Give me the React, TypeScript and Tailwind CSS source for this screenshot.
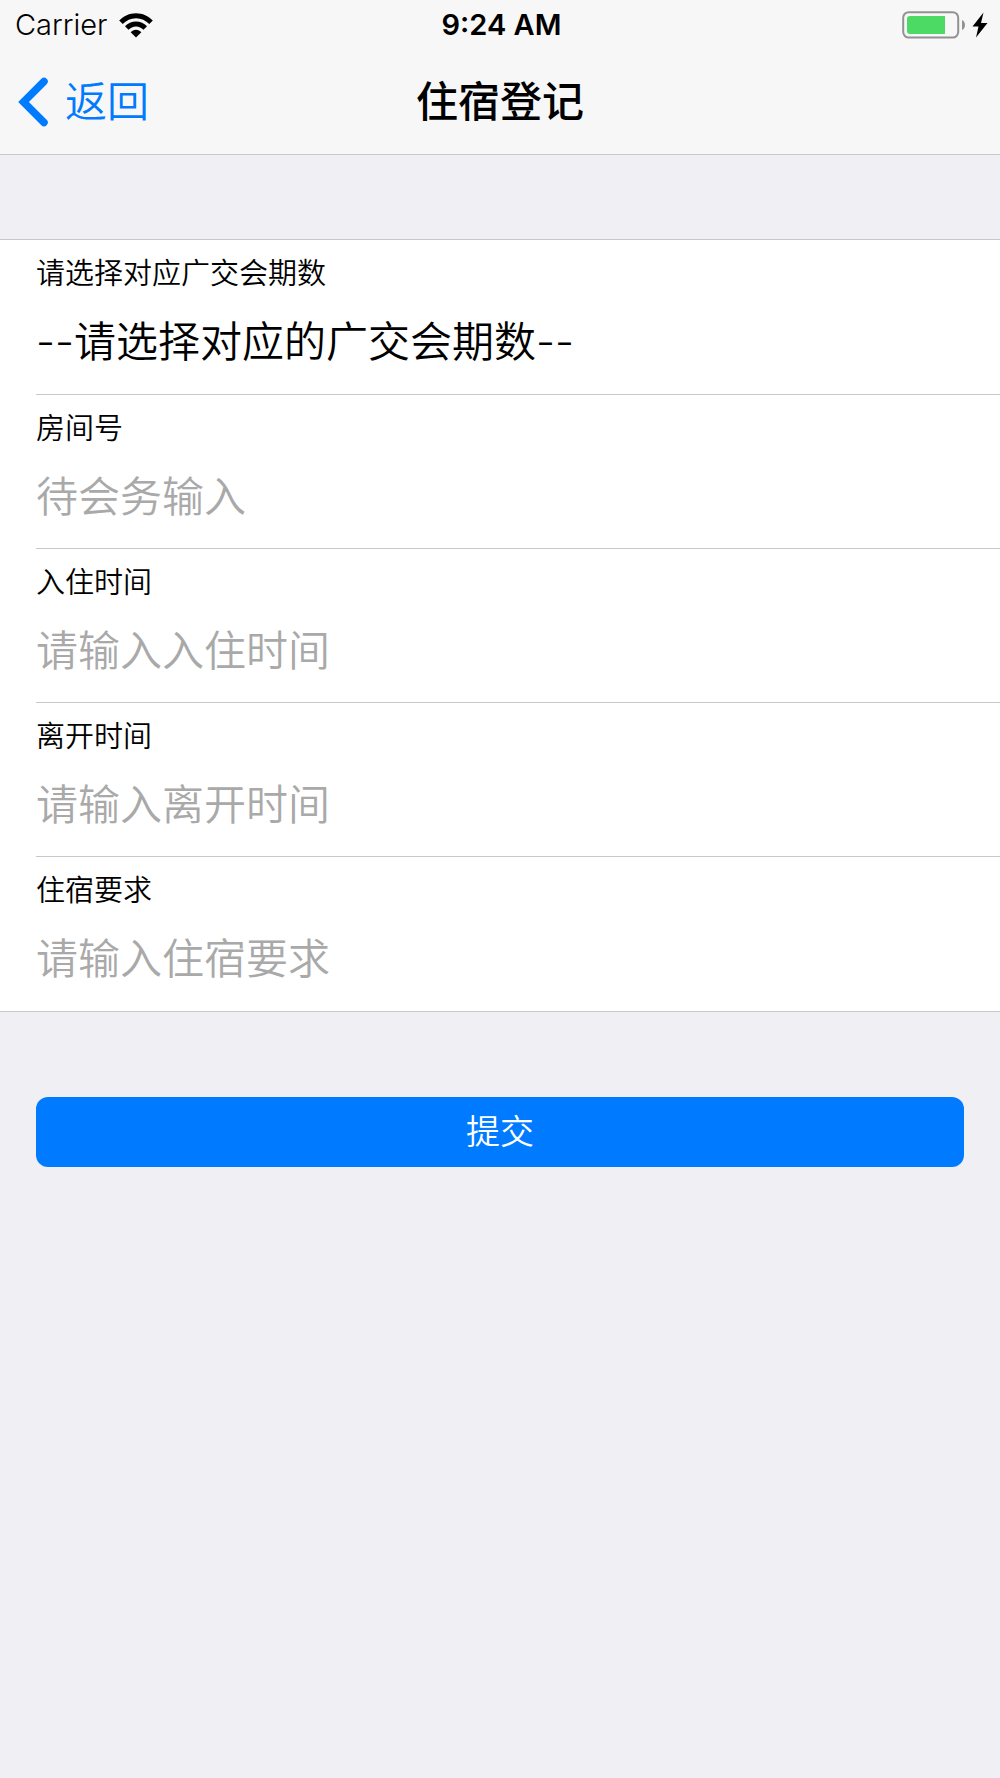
import React, { useState } from 'react';

interface TextField {
    id: string;
    label: string;
    placeholder: string;
}

const textFields: TextField[] = [
    { id: 'room', label: '房间号', placeholder: '待会务输入' },
    { id: 'checkin', label: '入住时间', placeholder: '请输入入住时间' },
    { id: 'checkout', label: '离开时间', placeholder: '请输入离开时间' },
    { id: 'request', label: '住宿要求', placeholder: '请输入住宿要求' },
];

const WifiIcon: React.FC = () => (
    <svg className="w-[34px] h-[25px]" viewBox="0 0 34 25" aria-hidden="true">
        <path d="M0.2 7.6C4.6 3 10.4 0.3 17 0.3s12.4 2.7 16.8 7.3l-3.5 3.5C26.8 7.5 22.2 5.3 17 5.3S7.2 7.5 3.7 11.1z" />
        <path d="M6 13.3C8.9 10.3 12.7 8.4 17 8.4s8.1 1.9 11 4.9l-3.5 3.5c-2-2-4.6-3.4-7.5-3.4s-5.5 1.4-7.5 3.4z" />
        <path d="M11.7 19.2C13.1 17.6 14.9 16.7 17 16.7s3.9 0.9 5.3 2.5L17 24.6z" />
    </svg>
);

const BatteryIcon: React.FC = () => (
    <svg className="w-[64px] h-[28px]" viewBox="0 0 64 28" aria-hidden="true">
        <rect x="1.2" y="1.2" width="55" height="25.4" rx="5.5" fill="none" stroke="#929292" strokeWidth="2" />
        <path d="M8 5h35v18H8a3 3 0 0 1-3-3V8a3 3 0 0 1 3-3z" fill="#4cd964" />
        <path d="M60 9c4 1.5 4 8.5 0 10z" fill="#929292" />
    </svg>
);

const BoltIcon: React.FC = () => (
    <svg className="w-[16px] h-[26px]" viewBox="0 0 16 26" aria-hidden="true">
        <path d="M11.5 0.5L0.5 14.5h6L4 25.5l11.5-14.5H9z" />
    </svg>
);

const BackIcon: React.FC = () => (
    <svg className="w-[30px] h-[50px]" viewBox="0 0 30 50" fill="none" aria-hidden="true">
        <path d="M26 4.5L5.5 25L26 45.5" stroke="#007aff" strokeWidth="7.5" strokeLinecap="round" strokeLinejoin="miter" />
    </svg>
);

const App: React.FC = () => {
    const [session, setSession] = useState('');

    return (
        <div className="min-h-screen bg-[#efeff4] text-black font-[350] font-['Inter','Noto_Sans_CJK_SC',sans-serif]">
            <header className="bg-[#f7f7f7] border-b border-[#c8c7cc]">
                <div className="grid grid-cols-3 items-center h-[50px] pl-[15px] pr-3 text-[29px] leading-[50px]">
                    <div className="flex items-center gap-3">
                        <span>Carrier</span>
                        <WifiIcon />
                    </div>
                    <span className="text-center font-semibold">9:24 AM</span>
                    <div className="flex items-center justify-end gap-[6px]">
                        <BatteryIcon />
                        <BoltIcon />
                    </div>
                </div>
                <nav className="grid grid-cols-3 items-center h-[104px] px-[18px] text-[42px] leading-[60px]">
                    <button type="button" className="flex items-center gap-[17px] text-[#007aff] justify-self-start">
                        <BackIcon />
                        返回
                    </button>
                    <h1 className="text-center font-medium">住宿登记</h1>
                </nav>
            </header>

            <form onSubmit={(e) => e.preventDefault()}>
                <div className="mt-[84px] bg-white border-y border-[#c8c7cc] pt-px pl-9">
                    <div className="h-[154px] pt-[11px] border-b border-[#c8c7cc]">
                        <label htmlFor="session" className="block text-[29px] leading-[44px]">请选择对应广交会期数</label>
                        <select
                            id="session"
                            value={session}
                            onChange={(e) => setSession(e.target.value)}
                            className="block appearance-none bg-transparent w-full h-[60px] mt-4 text-[42px] leading-[60px] outline-none"
                        >
                            <option value="">--请选择对应的广交会期数--</option>
                        </select>
                    </div>
                    {textFields.map((field) => (
                        <div key={field.id} className="h-[154px] pt-3 border-b border-[#c8c7cc] last:border-b-0">
                            <label htmlFor={field.id} className="block text-[29px] leading-[44px]">{field.label}</label>
                            <input
                                id={field.id}
                                type="text"
                                placeholder={field.placeholder}
                                className="block bg-transparent w-full h-[60px] mt-4 text-[42px] leading-[60px] outline-none placeholder:text-[#a9a9a9]"
                            />
                        </div>
                    ))}
                </div>

                <div className="px-9 pt-[85px]">
                    <button type="submit" className="block w-full h-[70px] rounded-xl bg-[#007aff] text-white text-[34px] leading-[70px]">
                        提交
                    </button>
                </div>
            </form>
        </div>
    );
};

export default App;
